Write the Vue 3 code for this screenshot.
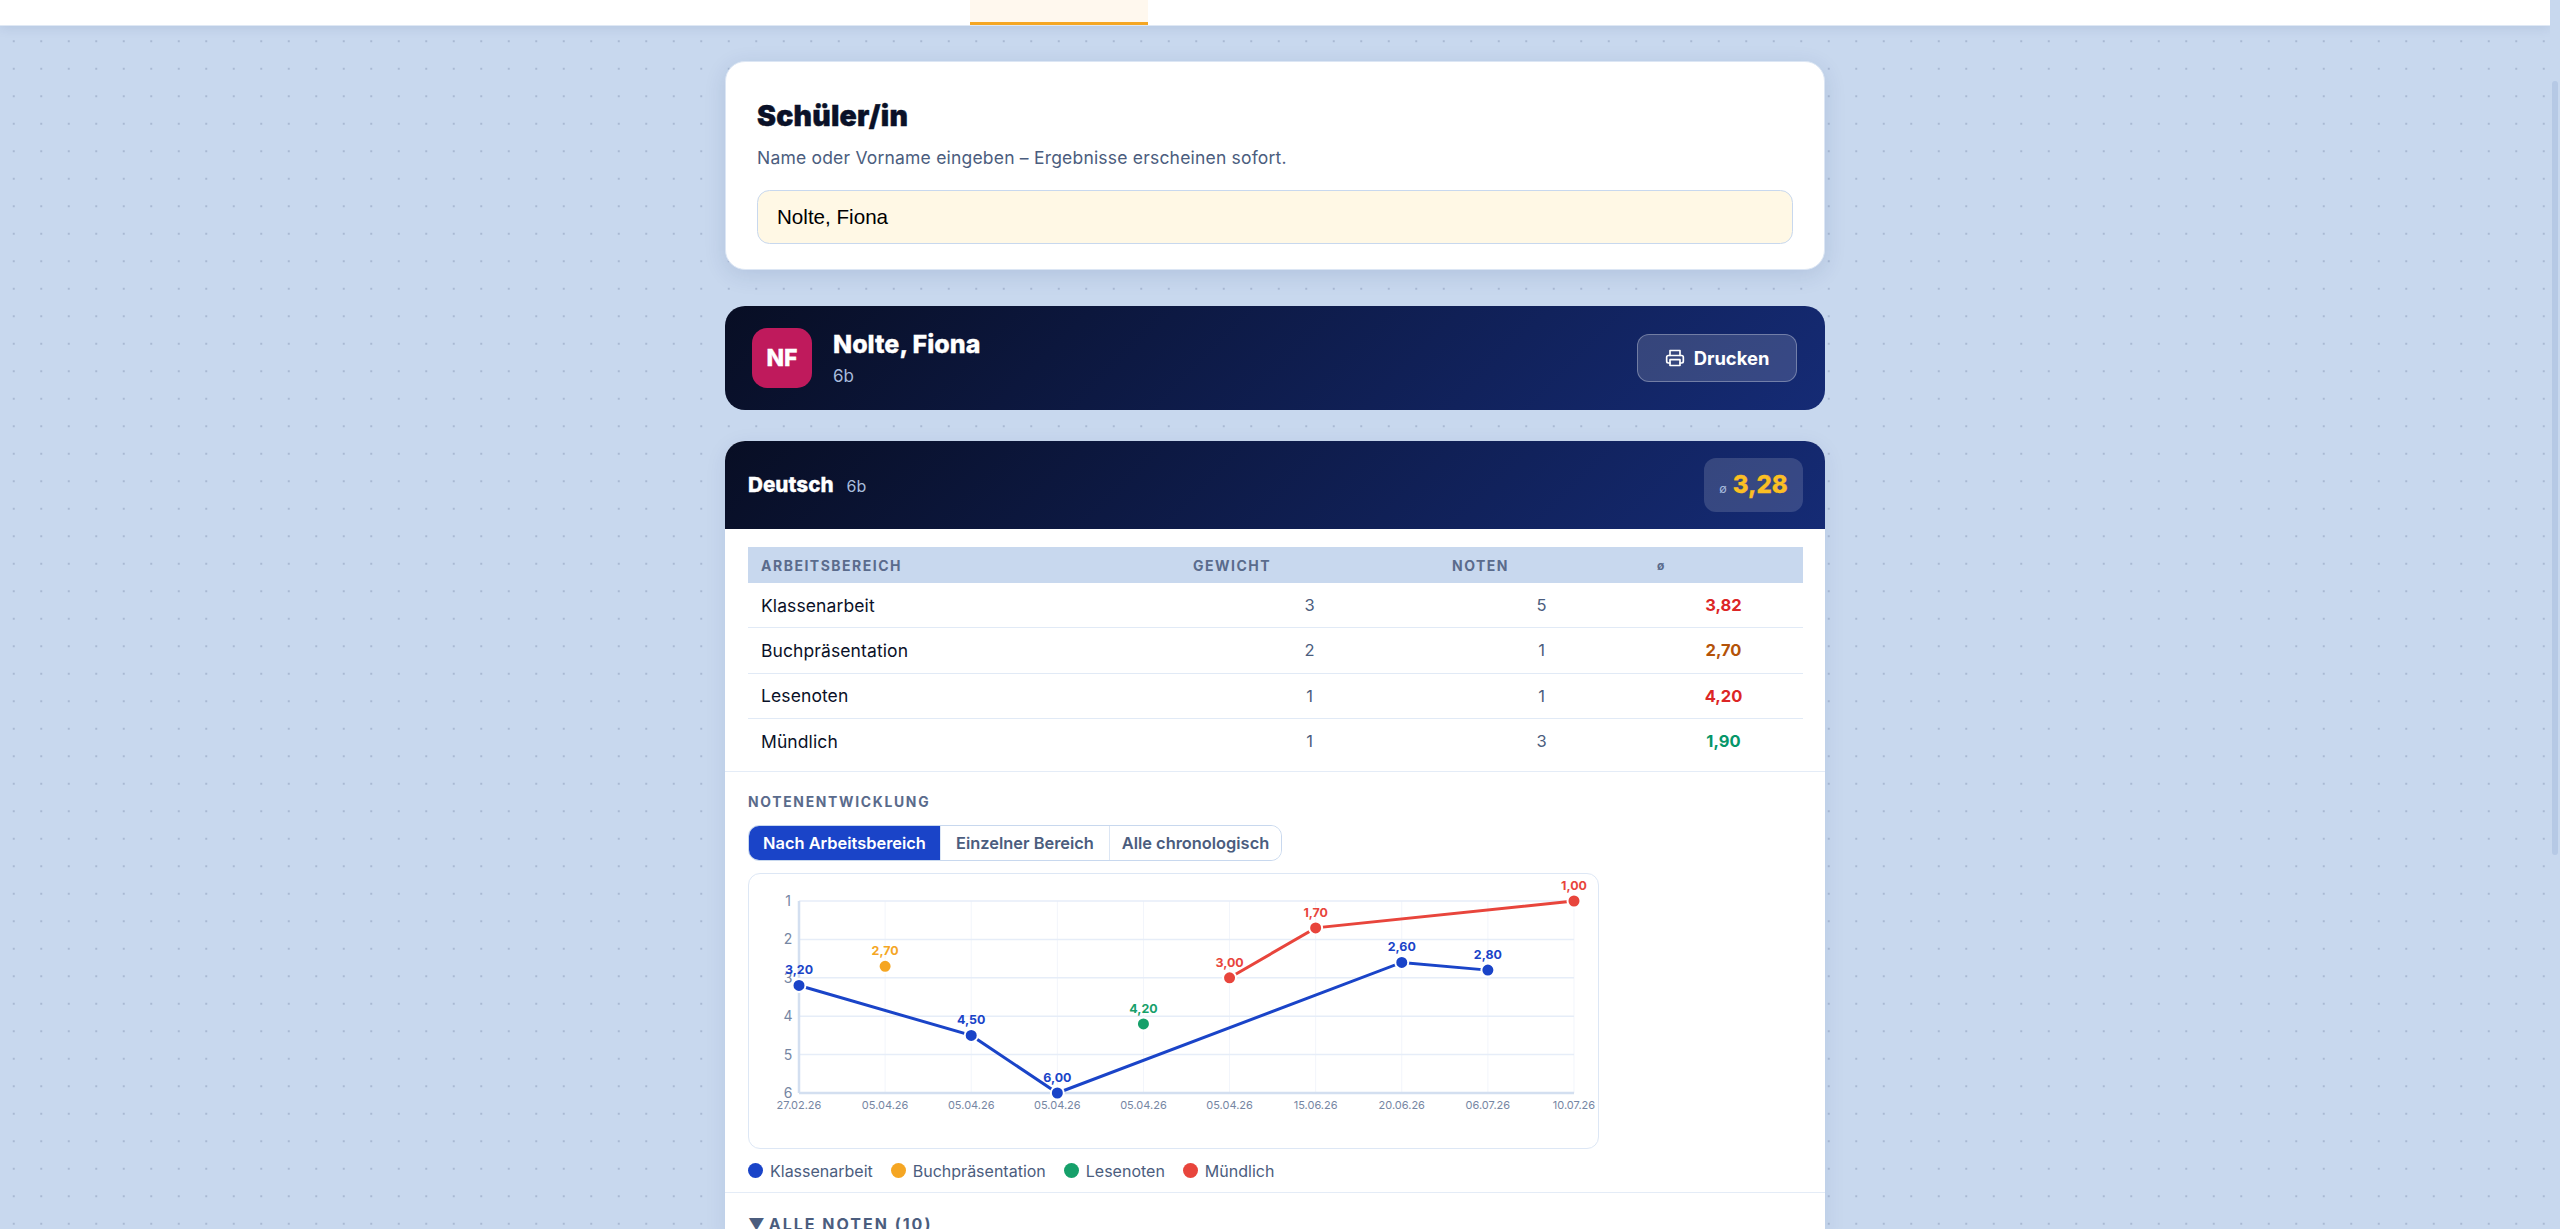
<script setup>
const xs = Array.from({ length: 10 }, (_, i) => 799 + i * 86.11)
const yOf = (v) => 901 + (v - 1) * 38.4
const dates = ['27.02.26', '05.04.26', '05.04.26', '05.04.26', '05.04.26', '05.04.26', '15.06.26', '20.06.26', '06.07.26', '10.07.26']
const grades = [1, 2, 3, 4, 5, 6]
const rows = [
  { name: 'Klassenarbeit', weight: 3, count: 5, avg: '3,82', cls: 'bad' },
  { name: 'Buchpräsentation', weight: 2, count: 1, avg: '2,70', cls: 'mid' },
  { name: 'Lesenoten', weight: 1, count: 1, avg: '4,20', cls: 'bad' },
  { name: 'Mündlich', weight: 1, count: 3, avg: '1,90', cls: 'good' },
]
const fmt = (v) => v.toFixed(2).replace('.', ',')
const series = [
  { name: 'Klassenarbeit', color: '#1a44c8', pts: [[0, 3.2], [2, 4.5], [3, 6], [7, 2.6], [8, 2.8]] },
  { name: 'Buchpräsentation', color: '#f5a623', pts: [[1, 2.7]] },
  { name: 'Lesenoten', color: '#16a06a', pts: [[4, 4.2]] },
  { name: 'Mündlich', color: '#e8453c', pts: [[5, 3], [6, 1.7], [9, 1]] },
].map((s) => ({
  ...s,
  line: s.pts.map(([i, v]) => `${xs[i]},${yOf(v)}`).join(' '),
  marks: s.pts.map(([i, v]) => ({ x: xs[i], y: yOf(v), label: fmt(v) })),
}))
</script>

<template>
  <div class="viewport">
    <div class="page">
      <div class="topbar">
        <div class="tab-active"></div>
      </div>
      <main class="content">
        <section class="card search">
          <h2 class="search-title">Schüler/in</h2>
          <p class="search-sub">Name oder Vorname eingeben – Ergebnisse erscheinen sofort.</p>
          <input class="search-input" type="text" value="Nolte, Fiona" />
        </section>

        <section class="student">
          <div class="avatar">NF</div>
          <div class="student-info">
            <div class="student-name">Nolte, Fiona</div>
            <div class="student-class">6b</div>
          </div>
          <button class="print">
            <svg class="print-icon" viewBox="0 0 24 24" fill="none" stroke="currentColor" stroke-width="2" stroke-linecap="round" stroke-linejoin="round">
              <path d="M6 9V3h12v6" />
              <path d="M6 18H4a2 2 0 0 1-2-2v-5a2 2 0 0 1 2-2h16a2 2 0 0 1 2 2v5a2 2 0 0 1-2 2h-2" />
              <rect x="6" y="14" width="12" height="7" />
            </svg>
            Drucken
          </button>
        </section>

        <section class="subject">
          <header class="subject-head">
            <div class="subject-title">
              <span class="subject-name">Deutsch</span>
              <span class="subject-class">6b</span>
            </div>
            <div class="subject-avg"><span class="avg-sign">ø</span><span class="avg-value">3,28</span></div>
          </header>

          <div class="table-wrap">
            <table class="grades">
              <colgroup>
                <col class="c1" /><col class="c2" /><col class="c3" /><col class="c4" />
              </colgroup>
              <thead>
                <tr><th>Arbeitsbereich</th><th>Gewicht</th><th>Noten</th><th class="th-avg">ø</th></tr>
              </thead>
              <tbody>
                <tr v-for="r in rows" :key="r.name">
                  <td class="cell-name">{{ r.name }}</td>
                  <td class="cell-num">{{ r.weight }}</td>
                  <td class="cell-num">{{ r.count }}</td>
                  <td class="cell-avg" :class="r.cls">{{ r.avg }}</td>
                </tr>
              </tbody>
            </table>
          </div>

          <div class="chart-section">
            <div class="section-label">Notenentwicklung</div>
            <div class="tabs">
              <button class="tab on">Nach Arbeitsbereich</button>
              <button class="tab">Einzelner Bereich</button>
              <button class="tab">Alle chronologisch</button>
            </div>
            <div class="chart-box">
              <svg class="chart" viewBox="748 872 851 276">
                <line v-for="x in xs" :key="'v' + x" :x1="x" :x2="x" y1="901" y2="1093" class="grid-v" />
                <line v-for="g in grades" :key="'h' + g" x1="799" x2="1574" :y1="yOf(g)" :y2="yOf(g)" class="grid-h" />
                <line x1="799" x2="799" y1="901" y2="1093" class="axis" />
                <line x1="799" x2="1574" y1="1093" y2="1093" class="axis" />
                <text v-for="g in grades" :key="'y' + g" x="788" :y="yOf(g) + 5" class="y-label">{{ g }}</text>
                <text v-for="(d, i) in dates" :key="'x' + i" :x="xs[i]" y="1109" class="x-label">{{ d }}</text>
                <g v-for="s in series" :key="s.name">
                  <polyline v-if="s.marks.length > 1" :points="s.line" fill="none" :stroke="s.color" stroke-width="3" />
                  <g v-for="m in s.marks" :key="m.x">
                    <circle :cx="m.x" :cy="m.y" r="6.5" :fill="s.color" stroke="#fff" stroke-width="2" />
                    <text :x="m.x" :y="m.y - 11" class="pt-label" :fill="s.color">{{ m.label }}</text>
                  </g>
                </g>
              </svg>
            </div>
            <div class="legend">
              <div v-for="s in series" :key="s.name" class="legend-item">
                <svg class="legend-dot" viewBox="0 0 15 15"><circle cx="7.5" cy="7.5" r="7.5" :fill="s.color" /></svg>
                {{ s.name }}
              </div>
            </div>
          </div>

          <div class="all-grades"><span class="caret">▼</span>Alle Noten (10)</div>
        </section>
      </main>
    </div>
    <div class="scrolltrack"><div class="scrollthumb"></div></div>
  </div>
</template>

<style>
html, body { margin: 0; overflow: hidden; }
</style>

<style scoped>
.viewport {
  display: flex;
  height: 1229px;
  overflow: hidden;
  background: #c8d8ee;
  font-family: Inter, "Noto Sans", sans-serif;
}
.page {
  flex: 1;
  min-width: 0;
  overflow: hidden;
  background-color: #c8d8ee;
  background-image: radial-gradient(circle, #a9b9d3 1.2px, transparent 1.5px);
  background-size: 27.5px 27.5px;
}
.topbar {
  height: 25px;
  background: #fff;
  border-bottom: 1px solid #dfe8f4;
  box-shadow: 0 2px 12px rgba(26, 50, 110, 0.1);
  padding-left: 970px;
}
.tab-active {
  width: 178px;
  height: 22px;
  background: #fff8ee;
  border-bottom: 3px solid #f5a623;
}
.content {
  width: 1100px;
  margin: 35px auto 0;
  display: flex;
  flex-direction: column;
}
.card.search {
  box-sizing: border-box;
  height: 209px;
  padding: 32px 31px 0;
  background: #fff;
  border: 1px solid #dce6f4;
  border-radius: 20px;
  box-shadow: 0 5px 22px rgba(26, 50, 110, 0.12);
}
.search-title {
  margin: 0;
  font-size: 28.5px;
  line-height: 44px;
  font-weight: 900;
  letter-spacing: 0.2px;
  -webkit-text-stroke: 0.4px #0a1128;
  color: #0a1128;
}
.search-sub {
  margin: 8px 0 0;
  font-size: 17.5px;
  line-height: 24px;
  letter-spacing: 0.2px;
  color: #4b5d7e;
}
.search-input {
  display: block;
  box-sizing: border-box;
  width: 100%;
  height: 54px;
  margin-top: 20px;
  padding: 0 19px;
  font-family: "Liberation Sans", Arial, sans-serif;
  font-size: 20.6px;
  color: #000;
  background: #fff8e5;
  border: 1.5px solid #c8d8ee;
  border-radius: 12.5px;
  outline: none;
}
.student {
  box-sizing: border-box;
  height: 104px;
  margin-top: 36px;
  padding: 0 28px 0 27px;
  display: flex;
  align-items: center;
  border-radius: 20px;
  background: linear-gradient(135deg, #080e24, #152b75);
  color: #fff;
}
.avatar {
  width: 60px;
  height: 60px;
  border-radius: 15px;
  background: #bf1a5c;
  display: flex;
  align-items: center;
  justify-content: center;
  font-size: 23px;
  font-weight: 800;
  -webkit-text-stroke: 0.3px #fff;
}
.student-info { margin-left: 21px; flex: 1; padding-bottom: 3px; }
.student-name { font-size: 25px; line-height: 32px; font-weight: 800; -webkit-text-stroke: 0.3px #fff; }
.student-class { font-size: 17px; line-height: 20px; margin-top: 6px; color: #a8bbdc; }
.print {
  box-sizing: border-box;
  width: 160px;
  height: 48px;
  display: flex;
  align-items: center;
  justify-content: center;
  gap: 9px;
  font: inherit;
  font-size: 18.4px;
  font-weight: 700;
  color: #fff;
  background: rgba(255, 255, 255, 0.15);
  border: 1.5px solid rgba(255, 255, 255, 0.3);
  border-radius: 12px;
}
.print-icon { width: 20px; height: 20px; }
.subject {
  margin-top: 31px;
  background: #fff;
  border-radius: 20px 20px 0 0;
  box-shadow: 0 5px 22px rgba(26, 50, 110, 0.08);
}
.subject-head {
  box-sizing: border-box;
  height: 88px;
  padding: 0 22px 0 23px;
  display: flex;
  align-items: center;
  justify-content: space-between;
  border-radius: 20px 20px 0 0;
  background: linear-gradient(135deg, #080e24, #152b75);
  color: #fff;
}
.subject-title { display: flex; align-items: baseline; gap: 13px; padding-bottom: 2px; }
.subject-name { font-size: 20.7px; font-weight: 800; -webkit-text-stroke: 0.3px #fff; }
.subject-class { font-size: 16px; color: #a8bbdc; }
.subject-avg {
  box-sizing: border-box;
  width: 99px;
  height: 54px;
  display: flex;
  align-items: baseline;
  justify-content: center;
  gap: 6px;
  padding-top: 12px;
  background: rgba(255, 255, 255, 0.15);
  border-radius: 12px;
}
.avg-sign { font-size: 12.5px; color: #a8bbdc; }
.avg-value { font-size: 24px; font-weight: 800; color: #fbbf24; -webkit-text-stroke: 0.3px #fbbf24; }
.table-wrap { padding: 18px 22px 8px 23px; border-bottom: 1.5px solid #e4ecf7; }
.grades { width: 100%; table-layout: fixed; border-collapse: collapse; }
.c1 { width: 432px; }
.c2 { width: 259px; }
.c3 { width: 205px; }
.grades th {
  height: 36px;
  padding: 0 13px;
  text-align: left;
  background: #c8d8ee;
  font-size: 14px;
  font-weight: 700;
  letter-spacing: 1.5px;
  text-transform: uppercase;
  color: #5a6b8c;
}
.grades .th-avg { text-transform: none; font-size: 12px; }
.grades td {
  height: 44.3px;
  padding: 0 13px;
  font-size: 16.5px;
  border-bottom: 1.5px solid #e1eaf6;
}
.grades tr:last-child td { border-bottom: 0; }
.grades .cell-name { color: #0a1128; font-size: 17.5px; letter-spacing: 0.1px; }
.cell-num { text-align: center; color: #4b5d7e; }
.cell-avg { text-align: center; font-weight: 700; }
.bad { color: #dc2626; }
.mid { color: #b45309; }
.good { color: #059669; }
.chart-section { padding: 19.5px 23px 0; border-bottom: 1.5px solid #e4ecf7; box-sizing: border-box; height: 421px; }
.section-label {
  font-size: 13.9px;
  line-height: 20px;
  font-weight: 700;
  letter-spacing: 1.7px;
  text-transform: uppercase;
  color: #5a6b8c;
}
.tabs {
  box-sizing: border-box;
  display: inline-flex;
  height: 36px;
  margin-top: 13px;
  vertical-align: top;
  border: 1.5px solid #c8d8ee;
  border-radius: 11px;
  overflow: hidden;
}
.tab {
  box-sizing: border-box;
  padding: 0;
  font: inherit;
  font-size: 16.4px;
  font-weight: 600;
  color: #4b5d7e;
  background: #fff;
  border: 0;
  border-left: 1.5px solid #dce6f4;
}
.tab:nth-child(1) { width: 191px; border-left: 0; }
.tab:nth-child(2) { width: 169px; }
.tab:nth-child(3) { width: 172px; }
.tab.on { background: #1a44c8; color: #fff; }
.chart-box {
  box-sizing: border-box;
  width: 851px;
  height: 276px;
  margin-top: 12px;
  background: #fff;
  border: 1.5px solid #dde7f5;
  border-radius: 12px;
  overflow: hidden;
}
.chart { display: block; width: 851px; height: 276px; margin: -1.5px; font-family: Inter, sans-serif; }
.grid-h { stroke: #e6edf8; stroke-width: 1.5; }
.grid-v { stroke: #f2f5fb; stroke-width: 1; }
.axis { stroke: #d3dff0; stroke-width: 2.5; }
.y-label { font-size: 14px; fill: #7686a3; text-anchor: middle; }
.x-label { font-size: 11px; fill: #7686a3; text-anchor: middle; }
.pt-label { font-size: 12.4px; font-weight: 700; text-anchor: middle; }
.legend {
  display: flex;
  gap: 18px;
  margin-top: 12px;
  font-size: 16px;
  line-height: 20px;
  color: #4b5d7e;
}
.legend-item { display: flex; align-items: center; gap: 7px; }
.legend-dot { width: 15px; height: 15px; }
.all-grades {
  padding: 19px 23px 0;
  font-size: 16px;
  line-height: 24px;
  font-weight: 700;
  letter-spacing: 2px;
  text-transform: uppercase;
  color: #4b5d7e;
}
.caret { margin-right: 4px; letter-spacing: 0; }
.scrolltrack {
  position: relative;
  width: 10px;
  flex: none;
  background: #c8d8ee;
}
.scrollthumb {
  position: absolute;
  left: 2px;
  top: 81px;
  width: 6px;
  height: 774px;
  border-radius: 3px;
  background: #b6c9e5;
}
</style>
